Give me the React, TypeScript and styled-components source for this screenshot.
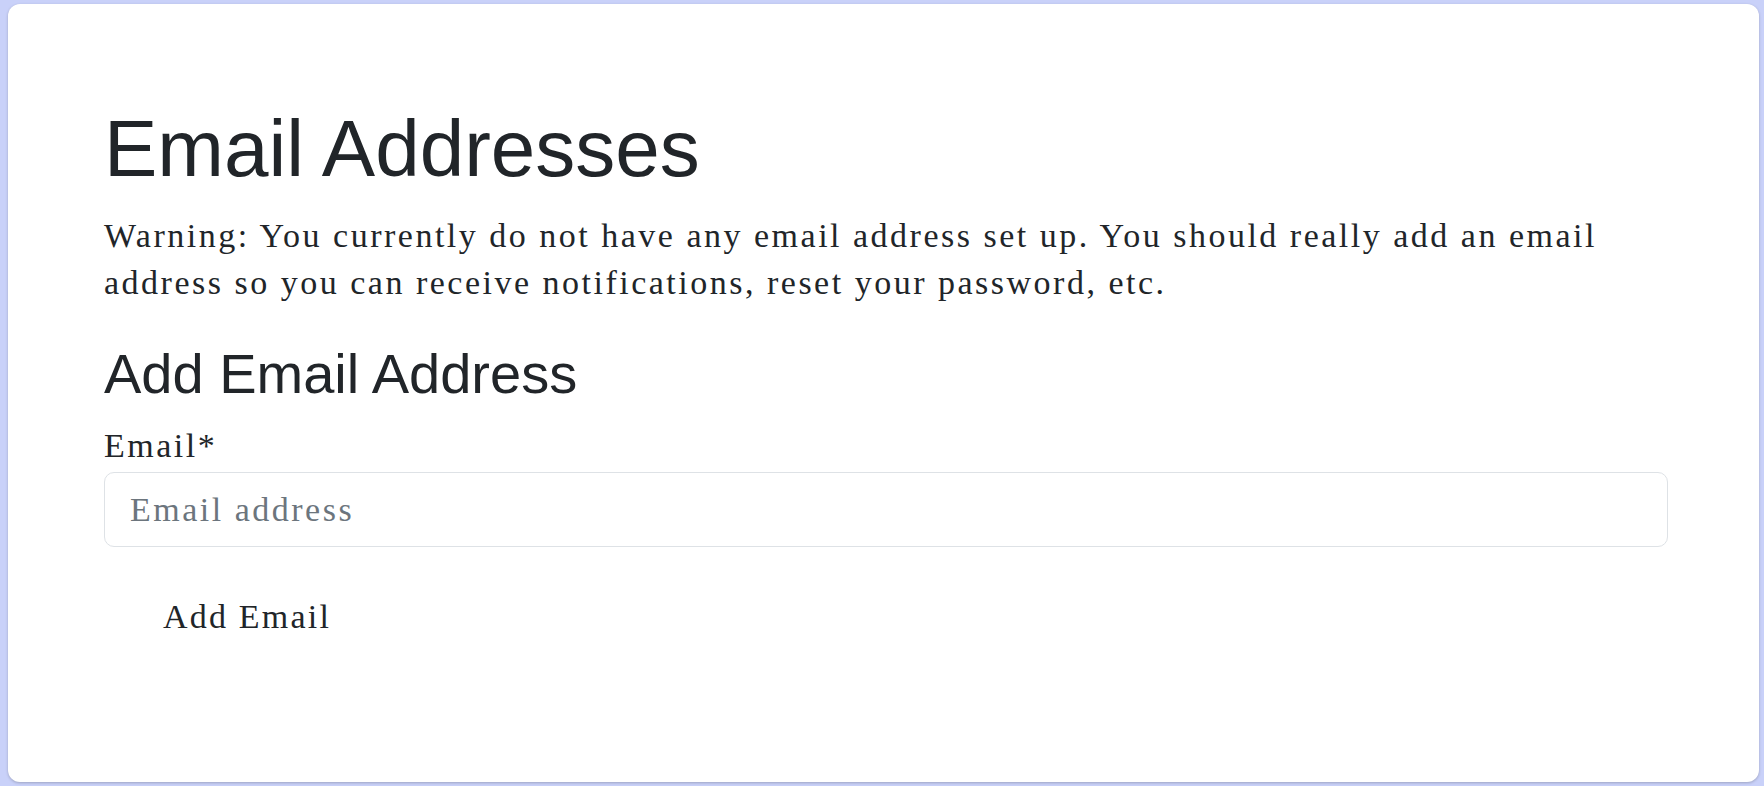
import React from "react";
import styled, { createGlobalStyle } from "styled-components";

const GlobalStyle = createGlobalStyle`
  html, body {
    margin: 0;
    padding: 0;
    background: #c9d1f9;
  }
  * { box-sizing: border-box; }
`;

const Page = styled.div`
  min-height: 100vh;
  padding: 4px 5px 4px 8px;
  display: flex;
`;

const Card = styled.main`
  flex: 1;
  background: #ffffff;
  border-radius: 12px;
  box-shadow: 0 1px 3px rgba(0, 0, 0, 0.22);
  padding: 97px 91px 40px 96px;
  color: #212529;
  font-family: "Liberation Serif", serif;
  font-size: 34px;
  line-height: 47px;
  letter-spacing: 2.5px;
`;

const Title = styled.h1<{ $size: number; $gapBelow: number; $gapAbove?: number }>`
  font-family: "Liberation Sans", Arial, sans-serif;
  font-weight: 400;
  letter-spacing: 0;
  font-size: ${(p) => p.$size}px;
  line-height: 1.2;
  margin: ${(p) => p.$gapAbove ?? 0}px 0 ${(p) => p.$gapBelow}px;
  color: #212529;
`;

const Paragraph = styled.p`
  margin: 0;
`;

const Form = styled.form`
  display: flex;
  flex-direction: column;
  align-items: flex-start;
  margin-top: 15px;
`;

const Label = styled.label`
  display: block;
  margin-bottom: 3px;
`;

const Input = styled.input`
  width: 100%;
  height: 75px;
  border: 1px solid #dee2e6;
  border-radius: 10px;
  padding: 0 25px;
  font-family: "Liberation Serif", serif;
  font-size: 34px;
  letter-spacing: 2.5px;
  color: #212529;
  background: #ffffff;
  outline: none;
  &::placeholder {
    color: #6c757d;
  }
`;

const Button = styled.button`
  margin-top: 23px;
  padding: 23px 59px;
  border: none;
  background: transparent;
  font-family: "Liberation Serif", serif;
  font-size: 34px;
  line-height: 47px;
  letter-spacing: 2.2px;
  color: #212529;
  cursor: pointer;
`;

export default function App() {
  return (
    <>
      <GlobalStyle />
      <Page>
        <Card>
          <Title as="h1" $size={80} $gapBelow={15}>
            Email Addresses
          </Title>
          <Paragraph>
            Warning: You currently do not have any email address set up. You should really add an email
            address so you can receive notifications, reset your password, etc.
          </Paragraph>
          <Title as="h2" $size={56} $gapAbove={34} $gapBelow={0}>
            Add Email Address
          </Title>
          <Form onSubmit={(e) => e.preventDefault()}>
            <Label htmlFor="email">Email*</Label>
            <Input id="email" type="email" placeholder="Email address" />
            <Button type="submit">Add Email</Button>
          </Form>
        </Card>
      </Page>
    </>
  );
}
